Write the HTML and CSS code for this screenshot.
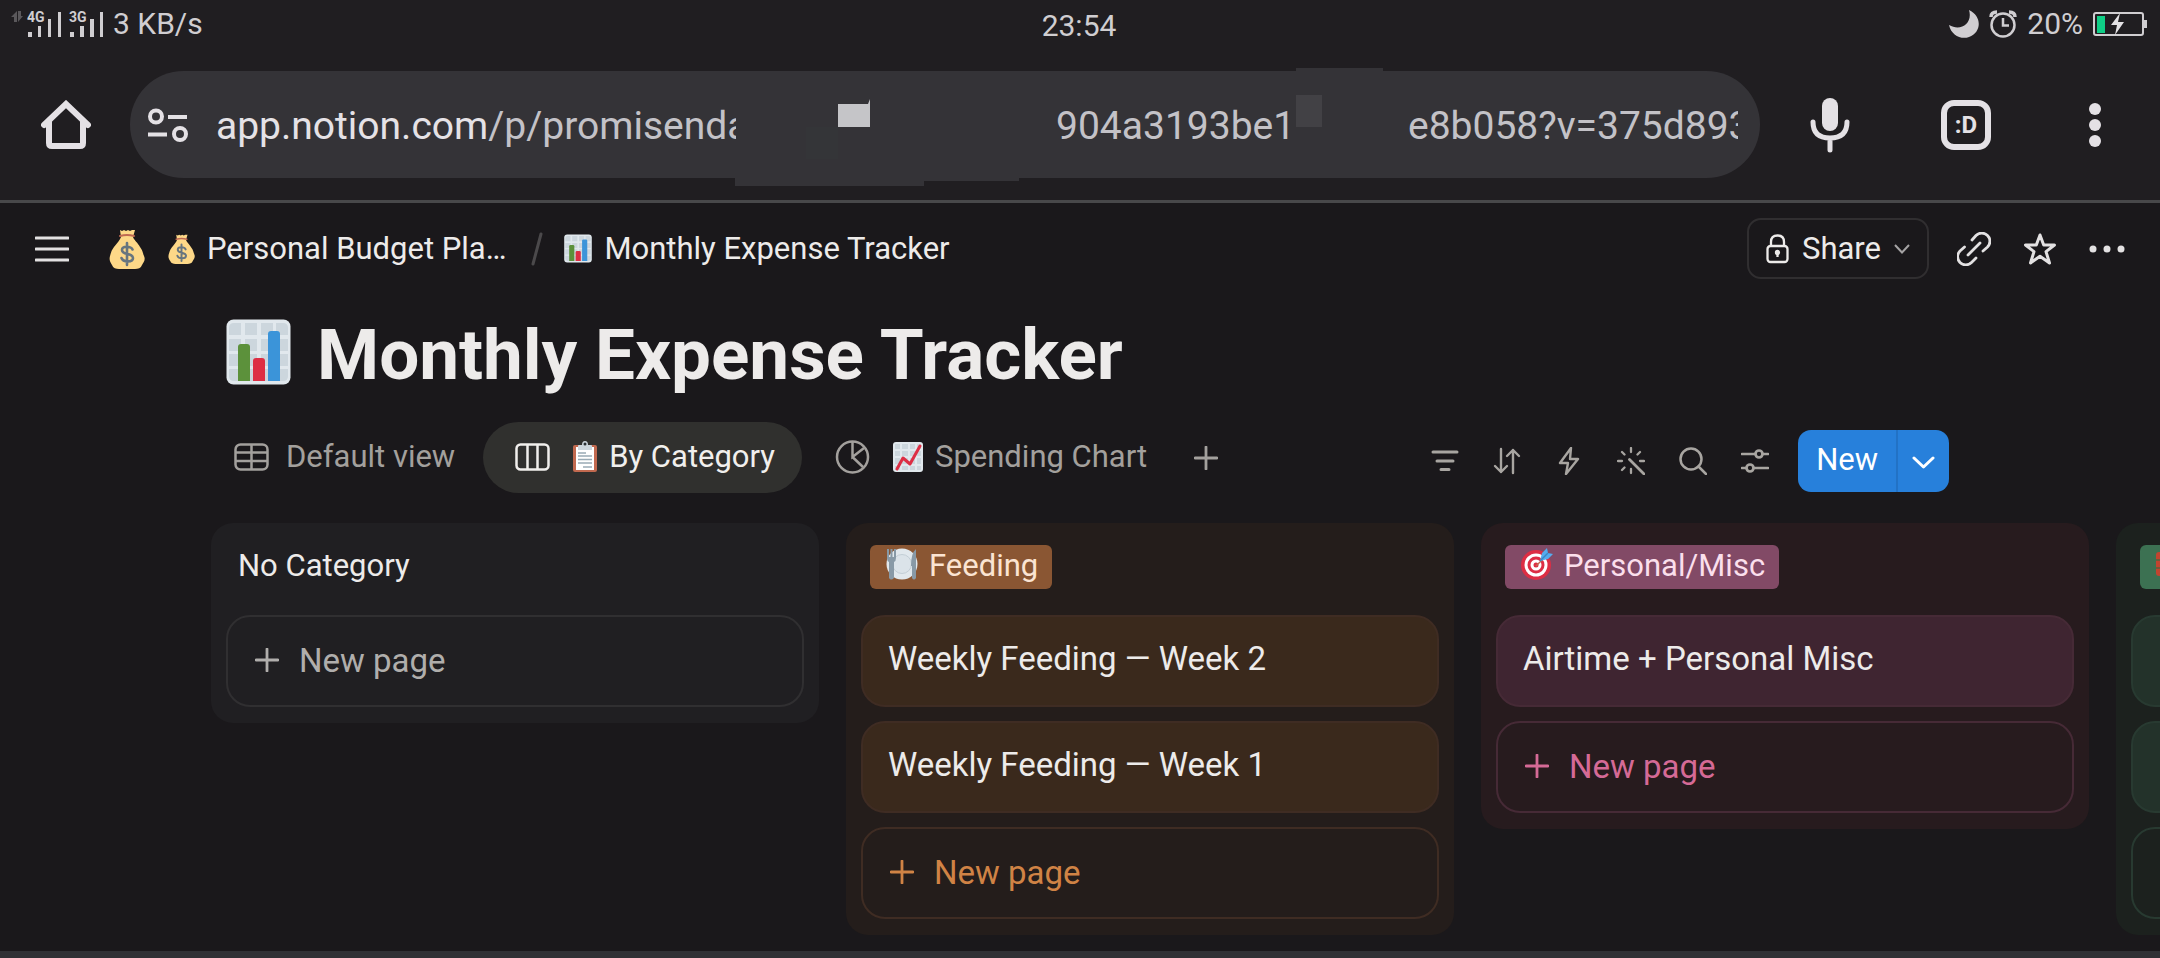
FILE: index.html
```html
<!DOCTYPE html>
<html lang="en">
<head>
<meta charset="utf-8">
<meta name="viewport" content="width=device-width, initial-scale=1">
<title>Monthly Expense Tracker</title>
<link rel="stylesheet" href="styles.css">
</head>
<body>
<svg class="symbols" aria-hidden="true">
  <symbol id="money" viewBox="0 0 36 40">
    <path d="M11 1 L13 2 L15 1 L17 2 L19 1 L21 2 L23 1 L26 1 L24 8 C25 11 29 14 31 18 C34 22 34 25 35 27 C37 31 34 34 33 36 C32 39 29 40 26 40 L10 40 C7 40 4 39 3 36 C1 33 0 31 1 27 C2 24 2 22 5 18 C8 14 11 11 12 8 Z" fill="#fdd888"/>
    <path d="M11 7 Q18 5 25 7" stroke="#bf6952" stroke-width="2" fill="none" stroke-linecap="round"/>
    <path d="M23.500 20.500 C22 17 13 16.500 13 21 C13 26.500 24 23.500 24 29 C24 33.500 14 33.500 12.500 29 M18 14 V36" stroke="#67757f" stroke-width="2.600" fill="none" stroke-linecap="round"/>
  </symbol>
  <symbol id="bars" viewBox="0 0 65 66">
    <rect x=".5" y=".5" width="64" height="65" rx="7" fill="#e1e8ed"/>
    <g fill="#ccd6dd"><path d="M8 4h7v12H3V9q0-5 5-5zM19 4h12v12H19zM35 4h12v12H35zM50 4h7q5 0 5 5v7H50zM3 20h12v12H3zM19 20h12v12H19zM35 20h12v12H35zM50 20h12v12H50zM3 35h12v12H3zM19 35h12v12H19zM35 35h12v12H35zM50 35h12v12H50zM3 50h12v12H8q-5 0-5-5zM19 50h12v12H19zM35 50h12v12H35zM50 50h12v7q0 5-5 5h-7z"/></g>
    <path d="M12 62V28q0-3 3-3h6q3 0 3 3v34z" fill="#5c913b"/>
    <path d="M27 62V42q0-3 3-3h6q3 0 3 3v20z" fill="#dd2e44"/>
    <path d="M42 62V15q0-3 3-3h6q3 0 3 3v47z" fill="#3b94d9"/>
  </symbol>
  <symbol id="trend" viewBox="0 0 30 30">
    <rect width="30" height="30" rx="3" fill="#e1e8ed"/>
    <path d="M2 2h5v5H2zM9 2h6v5H9zM17 2h5v5h-5zM24 2h4v5h-4zM2 9h5v5H2zM9 9h6v5H9zM17 9h5v5h-5zM24 9h4v5h-4zM2 16h5v6H2zM9 16h6v6H9zM17 16h5v6h-5zM24 16h4v6h-4zM2 24h5v4H2zM9 24h6v4H9zM17 24h5v4h-5zM24 24h4v4h-4z" fill="#ccd6dd"/>
    <path d="M4 27 L10 16 L17 22 L27 4" fill="none" stroke="#dd2e44" stroke-width="3" stroke-linecap="round" stroke-linejoin="round"/>
  </symbol>
  <symbol id="clipboard" viewBox="0 0 24 31">
    <rect y="4" width="24" height="27" rx="2" fill="#c1694f"/>
    <path d="M3 6h18v23H3z" fill="#fff"/>
    <path d="M5 9V5q0-1 1-1h3q0-4 3-4t3 4h3q1 0 1 1v4z" fill="#ccd6dd"/>
    <circle cx="12" cy="3" r="1.500" fill="#292f33"/>
    <path d="M5 12h8M5 15h14M5 18.500h14M5 22h14M10 26h9" stroke="#99aab5" stroke-width="1.400"/>
  </symbol>
  <symbol id="plate" viewBox="0 0 32 32">
    <circle cx="16" cy="16" r="15.500" fill="#e1e8ed"/>
    <circle cx="16" cy="16" r="9.500" fill="#dbe3e9" stroke="#c3ced6"/>
    <path d="M1 1v9q0 3 2 4v16q2 3 5 0V14q2-1 2-4V1H8v8H6.500V1h-2v8H3V1z" fill="#8899a6"/>
    <path d="M30 1q-5 4-5 17h1v12q2 3 4 0z" fill="#8899a6"/>
  </symbol>
  <symbol id="target" viewBox="0 0 32 32">
    <circle cx="15" cy="17" r="15" fill="#dd2e44"/>
    <circle cx="15" cy="17" r="11.500" fill="#fff"/>
    <circle cx="15" cy="17" r="8.500" fill="#dd2e44"/>
    <circle cx="15" cy="17" r="5.500" fill="#fff"/>
    <circle cx="15" cy="17" r="2.500" fill="#dd2e44"/>
    <path d="M15 18 L25 8" stroke="#c1694f" stroke-width="1.500"/>
    <path d="M19 13 L21 5 L26 0 L27 5 L32 6 L27 11 Z" fill="#55acee"/>
    <path d="M19 13 L27 5" stroke="#3b88c3" stroke-width="1.500"/>
  </symbol>
  <symbol id="brick" viewBox="0 0 32 32">
    <rect y="4" width="32" height="24" rx="3" fill="#c1442f"/>
    <path d="M0 12h32M0 20h32" stroke="#6f5a3a" stroke-width="2"/>
  </symbol>
  <symbol id="plus" viewBox="0 0 24 24">
    <path d="M12 1v22M1 12h22" fill="none" stroke="currentColor" stroke-width="2.800" stroke-linecap="round"/>
  </symbol>
</svg>

<div class="screen">
  <header class="status">
    <div class="status-side">
      <svg width="94" height="28" viewBox="0 0 94 28" role="img" aria-label="Signal strength">
        <path d="M6 1L0 7h3v5h3zM7 12l5-6H10V1H7z" fill="#5a585b"/>
        <g fill="#d0ced1"><path d="M17 22h4v5h-4zM27 16h3v11h-3zM37 9h3v18h-3zM47 2h3v25h-3zM59 22h4v5h-4zM69 16h4v11h-4zM79 9h4v18h-4zM89 2h3v25h-3z"/>
        <text x="16" y="12" class="signal-text">4G</text><text x="58" y="12" class="signal-text">3G</text></g>
      </svg>
      <span>3 KB/s</span>
    </div>
    <time class="clock">23:54</time>
    <div class="status-side status-right">
      <svg width="30" height="28" viewBox="0 0 30 28" role="img" aria-label="Do not disturb"><path d="M20 0C33 6 33 22 20 27C12 30 2 25 0 15C12 22 24 13 20 0z" fill="#d0ced1"/></svg>
      <svg width="28" height="28" viewBox="0 0 28 28" fill="none" stroke="#d0ced1" stroke-width="2.500" role="img" aria-label="Alarm"><circle cx="14" cy="15" r="11.500"/><path d="M14 8v7.500h6"/><path d="M2 7Q2 2 8 2M26 7Q26 2 20 2" stroke-width="3.500"/></svg>
      <span>20%</span>
      <svg width="54" height="24" viewBox="0 0 54 24" role="img" aria-label="Charging"><rect x="1" y="1" width="49" height="22" rx="2" fill="none" stroke="#d0ced1" stroke-width="2"/><path d="M51 8h3v8h-3z" fill="#d0ced1"/><path d="M4 4h8v17H4z" fill="#0fce86"/><path d="M27 1L18 13h6l-2 10L31 10h-6z" fill="#e4e2e5"/></svg>
    </div>
  </header>

  <nav class="browser" aria-label="Browser">
    <button class="plain" aria-label="Home">
      <svg width="50" height="50" viewBox="0 0 50 50"><path d="M3 25L25 4L47 25M8 22V43q0 3 3 3H39q3 0 3-3V22" fill="none" stroke="#e4e1e5" stroke-width="6" stroke-linejoin="miter" stroke-linecap="round"/></svg>
    </button>
    <div class="address">
      <button class="plain" aria-label="Site settings">
        <svg width="42" height="34" viewBox="0 0 42 34" fill="none" stroke="#e4e1e5" stroke-width="4"><circle cx="9" cy="8.500" r="6"/><path d="M21 9h19M1 26.500h19"/><circle cx="33" cy="26" r="6"/></svg>
      </button>
      <div class="url" role="textbox" aria-label="Address">
        <span class="url-start"><span class="domain">app.notion.com</span>/p/promisenda</span>
        <span class="url-mid">904a3193be1</span>
        <span class="url-end">e8b058?v=375d8934</span>
      </div>
      <svg class="smudge" width="660" height="120" viewBox="0 0 660 120" aria-hidden="true">
        <path d="M0 106h330v4h-46v3h-95v5H0zM561 0h87v3h-87z" fill="#343337"/>
        <path d="M71 59h32v32H71z" fill="#343538"/>
        <path d="M103 36h30l2-5v28h-32z" fill="#c5c5c8"/>
        <path d="M561 27h26v32h-26z" fill="#424145"/>
      </svg>
    </div>
    <button class="plain mic" aria-label="Voice search">
      <svg width="40" height="56" viewBox="0 0 40 56"><rect x="12" y="1" width="16" height="33" rx="8" fill="#e4e1e5"/><path d="M3 25q0 16 17 16t17-16M20 41v12" fill="none" stroke="#e4e1e5" stroke-width="5" stroke-linecap="round"/></svg>
    </button>
    <button class="tab-count" aria-label="Open tabs">:D</button>
    <button class="plain more" aria-label="More">
      <svg width="14" height="46" viewBox="0 0 14 46" fill="#e4e1e5"><circle cx="7" cy="7" r="6"/><circle cx="7" cy="23" r="6"/><circle cx="7" cy="39" r="6"/></svg>
    </button>
  </nav>

  <div class="topbar">
    <button class="plain menu" aria-label="Menu"><svg width="34" height="26" viewBox="0 0 34 26"><path d="M1 2h32M1 13h32M1 24h32" stroke="#e3e1e2" stroke-width="3" stroke-linecap="round"/></svg></button>
    <svg class="bag" width="36" height="40"><use href="#money"/></svg>
    <a class="crumb" href="#"><svg width="27" height="30"><use href="#money"/></svg>Personal Budget Pla…</a>
    <svg class="slash" width="12" height="34" viewBox="0 0 12 34" aria-hidden="true"><path d="M10 2L2 32" stroke="#4b494b" stroke-width="3" stroke-linecap="round"/></svg>
    <a class="crumb" href="#"><svg width="28" height="29"><use href="#bars"/></svg>Monthly Expense Tracker</a>
    <div class="actions">
      <button class="share">
        <svg width="23" height="30" viewBox="0 0 23 30" fill="none" stroke="#edebea" stroke-width="2.300"><rect x="1.500" y="12" width="20" height="16" rx="3"/><path d="M5 12V8q0-6.500 6.500-6.500T18 8v4"/><circle cx="11.500" cy="18.500" r="1.500" fill="#edebea"/><path d="M11.500 18v5"/></svg>
        Share
        <svg width="16" height="10" viewBox="0 0 16 10"><path d="M1 1l7 7.500L15 1" fill="none" stroke="#a5a3a4" stroke-width="2"/></svg>
      </button>
      <button class="plain" aria-label="Copy link"><svg width="34" height="34" viewBox="0 0 34 34" fill="none" stroke="#e3e1e2" stroke-width="2.800" stroke-linecap="round"><path d="M11 23L23 11M15 8l4-4.500a8 8 0 0 1 11.500 11.500l-4.500 4M19 26l-4.500 4.500a8 8 0 0 1-11.500-11.500l4.500-4"/></svg></button>
      <button class="plain" aria-label="Favorite"><svg width="34" height="34" viewBox="0 0 34 34"><path d="M17 3L20.700 13H31.500L23 19.600L26.500 31L17 24.300L7.500 31L11 19.600L2.500 13H13.300Z" fill="none" stroke="#e3e1e2" stroke-width="3" stroke-linejoin="round"/></svg></button>
      <button class="plain" aria-label="More actions"><svg width="36" height="8" viewBox="0 0 36 8" fill="#e3e1e2"><circle cx="4" cy="4" r="3.500"/><circle cx="18" cy="4" r="3.500"/><circle cx="32" cy="4" r="3.500"/></svg></button>
    </div>
  </div>

  <main class="page">
    <h1 class="title"><svg width="65" height="66" aria-hidden="true"><use href="#bars"/></svg><span>Monthly Expense Tracker</span></h1>

    <div class="views">
      <div class="tabs" role="tablist">
        <button class="tab" role="tab">
          <svg width="35" height="28" viewBox="0 0 35 28" fill="none" stroke="currentColor" stroke-width="2.500"><rect x="1.500" y="1.500" width="32" height="25" rx="5"/><path d="M1 9.500h33M1 18h33M17.500 1v26"/></svg>
          <span>Default view</span>
        </button>
        <button class="tab active" role="tab" aria-selected="true">
          <svg width="35" height="28" viewBox="0 0 35 28" fill="none" stroke="currentColor" stroke-width="2.500"><rect x="1.500" y="1.500" width="32" height="25" rx="4"/><path d="M12.500 1v26M22.500 1v26"/></svg>
          <svg class="emoji" width="24" height="31"><use href="#clipboard"/></svg>
          <span>By Category</span>
        </button>
        <button class="tab chart" role="tab">
          <svg width="35" height="34" viewBox="0 0 35 34" fill="none" stroke="currentColor" stroke-width="2.500"><circle cx="17.500" cy="17" r="15.500"/><path d="M17.500 2v15L29 8M17.500 17L28 27"/></svg>
          <svg class="emoji" width="30" height="30"><use href="#trend"/></svg>
          <span>Spending Chart</span>
        </button>
        <button class="plain add" aria-label="Add view"><svg width="24" height="24"><use href="#plus"/></svg></button>
      </div>
      <div class="tools">
        <button class="plain" aria-label="Filter"><svg width="28" height="28" viewBox="0 0 28 28"><path d="M2 5h24M6 14h16M10 22.500h8" stroke="currentColor" stroke-width="3" stroke-linecap="round"/></svg></button>
        <button class="plain" aria-label="Sort"><svg width="28" height="28" viewBox="0 0 28 28" fill="none" stroke="currentColor" stroke-width="2.400" stroke-linecap="round" stroke-linejoin="round"><path d="M8 2v23M2 19l6 6 6-6M20 26V3M14 9l6-6 6 6"/></svg></button>
        <button class="plain" aria-label="Automations"><svg width="28" height="28" viewBox="0 0 28 28"><path d="M16 1L5 16h8l-2 11L23 12h-8z" fill="none" stroke="currentColor" stroke-width="2.400" stroke-linejoin="round"/></svg></button>
        <button class="plain" aria-label="Generate"><svg width="28" height="28" viewBox="0 0 28 28" fill="none" stroke="currentColor" stroke-width="2.300" stroke-linecap="round"><path d="M14 1v4M14 22v4M1 14h4M23 14h4M5 5l2.500 2.500M23 5l-2.500 2.500M5 23l2.500-2.500"/><path d="M12.500 12.500L27 27" stroke-width="2.800"/></svg></button>
        <button class="plain" aria-label="Search"><svg width="28" height="28" viewBox="0 0 28 28" fill="none" stroke="currentColor" stroke-width="2.500" stroke-linecap="round"><circle cx="12" cy="12" r="10.500"/><path d="M19.500 19.500L27 27"/></svg></button>
        <button class="plain" aria-label="View settings"><svg width="28" height="28" viewBox="0 0 28 28" fill="none" stroke="currentColor" stroke-width="2.700" stroke-linecap="round"><path d="M1 7h13M22 7h5M1 21h4M13 21h14"/><circle cx="18" cy="7" r="3.500"/><circle cx="9" cy="21" r="3.500"/></svg></button>
        <div class="new">
          <button class="new-main">New</button>
          <button class="new-drop" aria-label="New page options"><svg width="23" height="13" viewBox="0 0 23 13"><path d="M2 2l9.500 9L21 2" fill="none" stroke="#fff" stroke-width="3" stroke-linecap="round" stroke-linejoin="round"/></svg></button>
        </div>
      </div>
    </div>

    <div class="board">
      <section class="column">
        <h2 class="head">No Category</h2>
        <button class="card add-card"><svg width="24" height="24"><use href="#plus"/></svg>New page</button>
      </section>
      <section class="column orange">
        <h2 class="head"><span class="tag"><svg width="32" height="32"><use href="#plate"/></svg>Feeding</span></h2>
        <a class="card" href="#">Weekly Feeding — Week 2</a>
        <a class="card" href="#">Weekly Feeding — Week 1</a>
        <button class="card add-card"><svg width="24" height="24"><use href="#plus"/></svg>New page</button>
      </section>
      <section class="column pink">
        <h2 class="head"><span class="tag"><svg width="32" height="32"><use href="#target"/></svg>Personal/Misc</span></h2>
        <a class="card" href="#">Airtime + Personal Misc</a>
        <button class="card add-card"><svg width="24" height="24"><use href="#plus"/></svg>New page</button>
      </section>
      <section class="column green">
        <h2 class="head"><span class="tag"><svg width="32" height="32"><use href="#brick"/></svg></span></h2>
        <a class="card" href="#"></a>
        <a class="card" href="#"></a>
        <button class="card add-card" aria-label="New page"></button>
      </section>
    </div>
  </main>
  <footer class="bottom-edge"></footer>
</div>
</body>
</html>
```

FILE: styles.css
```css
* { box-sizing: border-box; }

body {
  margin: 0;
  overflow: hidden;
  background: #1a181b;
  color: #edebea;
  font-family: Roboto, sans-serif;
  font-size: 31px;
}

button, a {
  margin: 0;
  padding: 0;
  border: 0;
  background: none;
  color: inherit;
  font: inherit;
  text-decoration: none;
}

svg { display: block; flex: none; }

.symbols { position: absolute; width: 0; height: 0; }

.plain { display: flex; align-items: center; justify-content: center; }

.screen { display: flex; flex-direction: column; min-height: 100vh; }

/* Status bar */
.status {
  display: grid;
  grid-template-columns: 1fr auto 1fr;
  align-items: center;
  height: 50px;
  padding: 0 13px 2px 11px;
  background: #201e21;
  color: #d0ced1;
  font-size: 30px;
}
.status-side { display: flex; align-items: center; gap: 8px; line-height: 36px; }
.status-right { justify-content: flex-end; gap: 10px; }
.signal-text { font-size: 14px; font-weight: 700; }
.clock { padding-top: 2px; }

/* Browser toolbar */
.browser {
  display: flex;
  align-items: center;
  padding: 21px 58px 22px 41px;
  border-bottom: 3px solid #48484a;
  background: #201e21;
}
.address {
  position: relative;
  display: flex;
  flex: 1;
  align-items: center;
  gap: 27px;
  min-width: 0;
  height: 107px;
  margin: 0 50px 0 39px;
  padding: 0 22px 0 17px;
  border-radius: 54px;
  background: #343337;
}
.url {
  position: relative;
  z-index: 1;
  display: flex;
  flex: 1;
  min-width: 0;
  padding-top: 3px;
  overflow: hidden;
  color: #c3c2c7;
  font-size: 39px;
  line-height: 48px;
  white-space: nowrap;
}
.domain { color: #e5e2e6; }
.url span { flex: none; }
.url .url-start { width: 520px; overflow: hidden; }
.url-mid { margin-left: 320px; }
.url .url-mid { width: 240px; }
.url-end { margin-left: 112px; }
.smudge { position: absolute; top: -3px; left: 605px; }
.tab-count {
  width: 50px;
  height: 50px;
  margin: 0 97px 0 91px;
  border: 6px solid #e4e1e5;
  border-radius: 13px;
  color: #e4e1e5;
  font-size: 24px;
  font-weight: 700;
  line-height: 32px;
}

/* Page header */
.topbar { display: flex; align-items: center; height: 91px; padding: 0 35px; }
.bag { margin: 0 23px 0 40px; }
.crumb { display: flex; align-items: center; gap: 12px; line-height: 40px; }
.slash { margin: 0 21px 0 25px; }
.actions { display: flex; align-items: center; gap: 32px; margin-left: auto; }
.share {
  display: flex;
  align-items: center;
  gap: 13px;
  height: 61px;
  margin-right: -4px;
  padding: 0 17px;
  border: 2px solid #302e30;
  border-radius: 14px;
}

/* Title and views */
.page { display: flex; flex: 1; flex-direction: column; padding: 18px 0 16px 211px; }
.title {
  display: flex;
  align-items: center;
  gap: 26px;
  margin: 0 0 30px;
  padding-left: 15px;
  font-size: 71px;
  font-weight: 700;
  line-height: 74px;
}
.title span { padding-top: 6px; }
.views { display: flex; align-items: center; justify-content: space-between; padding-right: 211px; }
.tabs { display: flex; align-items: center; }
.tab {
  display: flex;
  align-items: center;
  height: 71px;
  padding: 0 28px 2px 23px;
  border-radius: 36px;
  color: #a3a09d;
}
.tab:first-child span { margin-left: 17px; }
.tab.active { padding: 0 27px 2px 32px; background: #30302e; color: #f1efed; }
.tab.chart { padding: 0 31px 2px 33px; }
.emoji { margin: 0 12px 0 23px; }
.add { margin-left: 16px; color: #a3a09d; }
.tools { display: flex; align-items: center; gap: 34px; padding-top: 6px; color: #a8a5a1; }
.new {
  display: flex;
  height: 62px;
  margin-left: -5px;
  overflow: hidden;
  border-radius: 13px;
  background: #2780db;
  color: #fff;
}
.new-main { padding: 0 18px 2px; }
.new-drop { padding: 4px 14px 0; border-left: 2px solid #2272c5; }

/* Board */
.board { display: flex; align-items: flex-start; gap: 27px; margin-top: 30px; overflow: hidden; }
.column {
  --column: #201f22;
  --line: #302f31;
  --card: #2a292b;
  --tag: #3a3a3a;
  --accent: #b0aeac;
  display: flex;
  flex: 0 0 608px;
  flex-direction: column;
  gap: 14px;
  padding: 22px 15px 16px;
  border-radius: 22px;
  background: var(--column);
}
.orange { --column: #241d1b; --line: #3f2c23; --card: #3a291c; --tag: #8a5633; --accent: #d08345; }
.pink { --column: #271b1e; --line: #462a36; --card: #3f2531; --tag: #824a66; --accent: #d56a96; }
.green { --column: #1c211e; --line: #283a31; --card: #23322a; --tag: #3c7152; --accent: #52a97c; }
.head {
  display: flex;
  height: 44px;
  margin: 0 0 12px;
  padding-left: 12px;
  font-size: 31px;
  font-weight: 400;
  line-height: 42px;
}
.orange .head, .pink .head, .green .head { padding-left: 9px; }
.tag {
  display: flex;
  gap: 11px;
  padding: 0 14px 0 16px;
  border-radius: 6px;
  background: var(--tag);
}
.tag svg { margin-top: 3px; }
.orange .tag { color: #fbe4d2; }
.pink .tag { color: #fbdfec; }
.card {
  display: flex;
  align-items: center;
  height: 92px;
  padding: 0 25px 5px;
  border: 2px solid var(--line);
  border-radius: 24px;
  background: var(--card);
  font-size: 33px;
}
.add-card { gap: 20px; padding: 0 27px 2px; background: none; color: var(--accent); }

.bottom-edge { height: 7px; background: #303135; }
```
